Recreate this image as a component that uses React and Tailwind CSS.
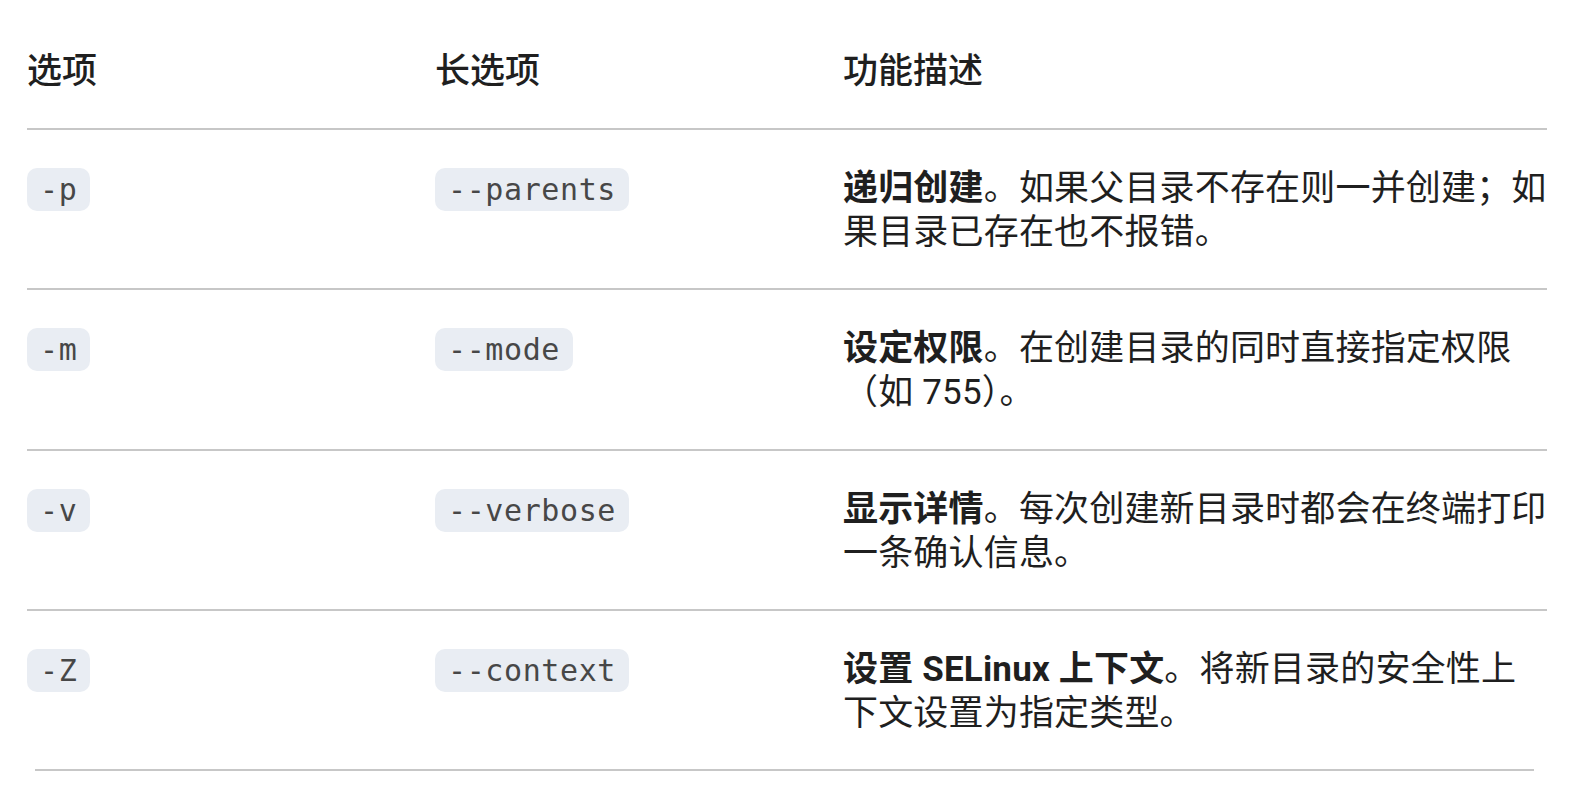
import React from "react";

const rows = [
  {
    short: "-p",
    long: "--parents",
    title: "递归创建",
    desc: "如果父目录不存在则一并创建；如果目录已存在也不报错。",
  },
  {
    short: "-m",
    long: "--mode",
    title: "设定权限",
    desc: "在创建目录的同时直接指定权限（如 755）。",
  },
  {
    short: "-v",
    long: "--verbose",
    title: "显示详情",
    desc: "每次创建新目录时都会在终端打印一条确认信息。",
  },
  {
    short: "-Z",
    long: "--context",
    title: "设置 SELinux 上下文",
    desc: "将新目录的安全性上下文设置为指定类型。",
  },
];

function Code({ children }) {
  return (
    <code className="inline-block rounded-[10px] bg-[#e9edf3] px-[13px] py-[1px] text-[30px] leading-[41px] tracking-[0.02em] text-[#474747] [font-family:'DejaVu_Sans_Mono','Liberation_Mono',monospace]">
      {children}
    </code>
  );
}

export default function App() {
  return (
    <div className="min-h-screen bg-white pl-[27px] pr-[23px] pt-[12px] text-[#1f1f1f] [font-family:Roboto,'Noto_Sans_CJK_SC',sans-serif]">
      <div className="grid grid-cols-[408px_408px_704px] border-b-2 border-[#c7c7c7] text-[35px] font-medium leading-[44px]">
        <div className="pt-[38px] pb-[34px]">选项</div>
        <div className="pt-[38px] pb-[34px]">长选项</div>
        <div className="pt-[38px] pb-[34px]">功能描述</div>
      </div>
      {rows.map((r, i) => (
        <div
          key={r.short}
          className={`grid grid-cols-[408px_408px_704px] text-[35px] leading-[44px] ${
            i < rows.length - 1 ? "border-b-2 border-[#c7c7c7]" : ""
          }`}
        >
          <div className="pt-[37px]">
            <Code>{r.short}</Code>
          </div>
          <div className="pt-[37px]">
            <Code>{r.long}</Code>
          </div>
          <div className="pt-[37px] pb-[33.3px] tracking-[0.005em]">
            <strong className="font-bold">{r.title}</strong>。{r.desc}
          </div>
        </div>
      ))}
      <div className="ml-[8px] mr-[13px] h-[2px] bg-[#c7c7c7]" />
    </div>
  );
}
